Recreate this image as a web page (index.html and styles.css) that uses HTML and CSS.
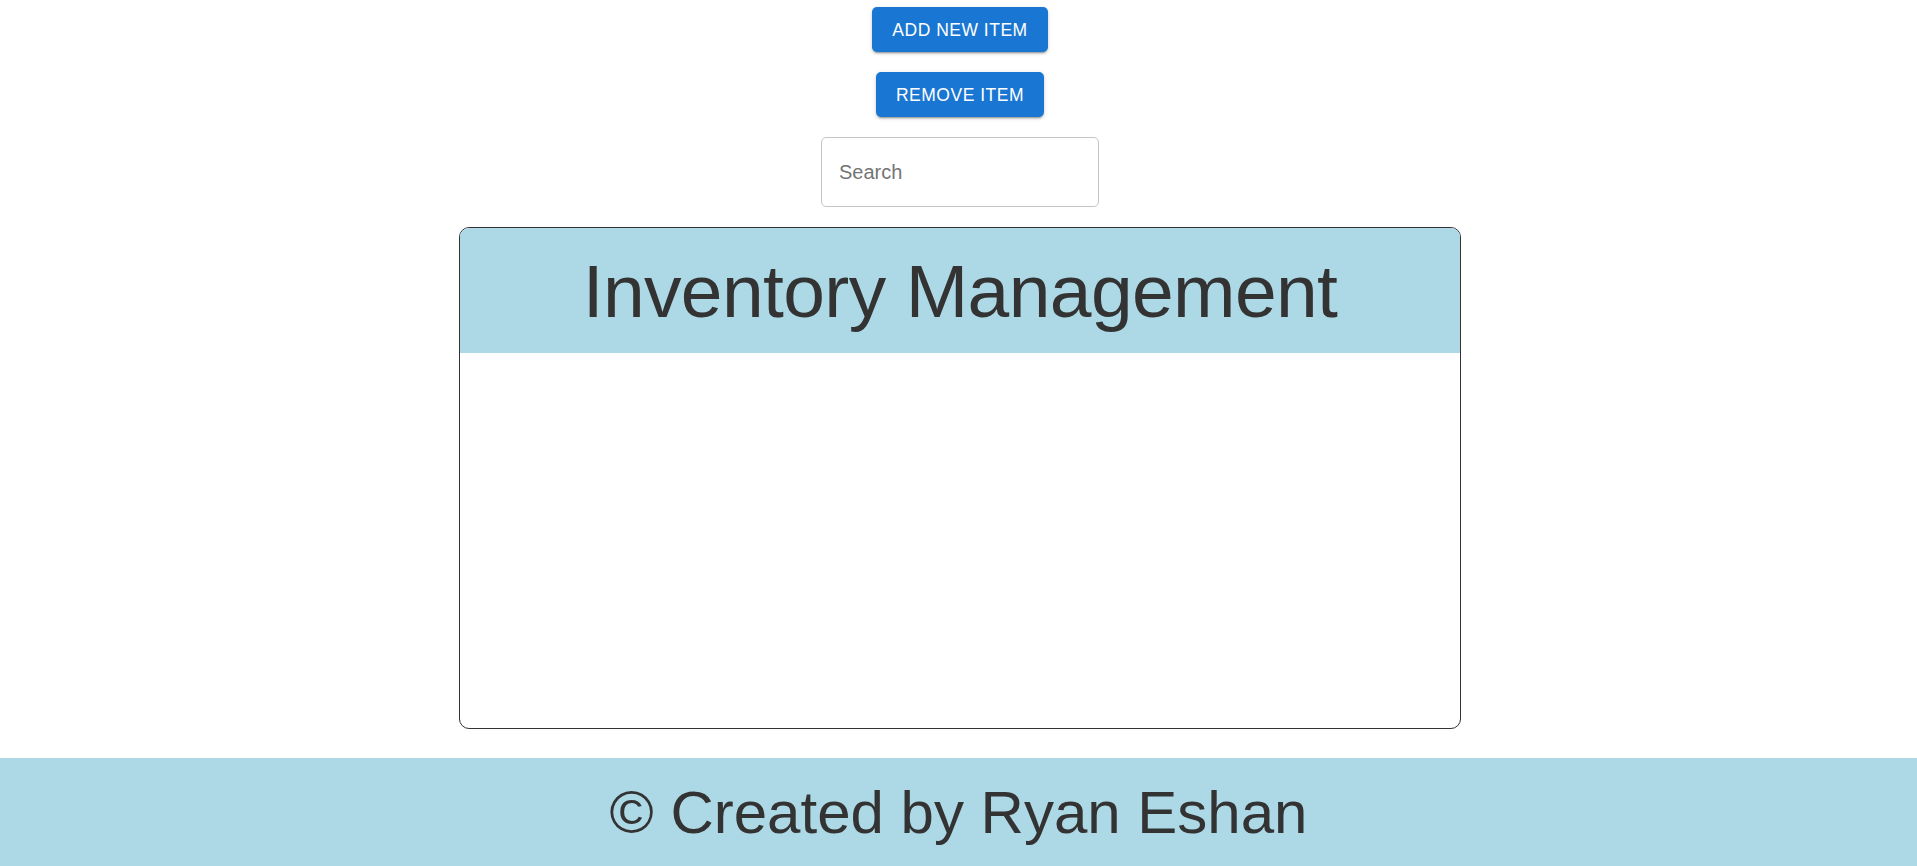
FILE: index.html
```html
<!DOCTYPE html>
<html lang="en">
<head>
<meta charset="utf-8">
<title>Inventory Management</title>
<link rel="stylesheet" href="styles.css">
</head>
<body>
<main class="page">
  <button class="btn" type="button">Add New Item</button>
  <button class="btn" type="button">Remove Item</button>
  <div class="search">
    <input class="search-input" type="text" placeholder="Search">
  </div>
  <section class="inventory">
    <header class="inventory-head">
      <h2 class="inventory-title">Inventory Management</h2>
    </header>
    <div class="inventory-body"></div>
  </section>
</main>
<footer class="footer">
  <h3 class="footer-text">© Created by Ryan Eshan</h3>
</footer>
</body>
</html>
```

FILE: styles.css
```css
html, body {
  margin: 0;
  padding: 0;
  height: 100%;
  overflow: hidden;
  background: #ffffff;
  font-family: "Liberation Sans", Arial, sans-serif;
}

.page {
  display: flex;
  flex-direction: column;
  align-items: center;
  gap: 20px;
  padding: 7px 0 0 3px;
}

.btn {
  font-family: "Liberation Sans", Arial, sans-serif;
  font-size: 17.5px;
  line-height: 30px;
  letter-spacing: 0.5px;
  text-transform: uppercase;
  color: #ffffff;
  background: #1976d2;
  border: 0;
  border-radius: 5px;
  padding: 7.5px 20px;
  box-shadow: 0 3px 1px -2px rgba(0,0,0,0.2), 0 2px 2px 0 rgba(0,0,0,0.14), 0 1px 5px 0 rgba(0,0,0,0.12);
  cursor: pointer;
}

.search {
  width: 278px;
  height: 70px;
  box-sizing: border-box;
  border: 1px solid #c4c4c4;
  border-radius: 5px;
  display: flex;
  align-items: center;
}

.search-input {
  border: 0;
  outline: none;
  background: transparent;
  width: 100%;
  padding: 0 17px;
  font-family: "Liberation Sans", Arial, sans-serif;
  font-size: 20px;
  color: #333;
}

.search-input::placeholder {
  color: #757575;
  opacity: 1;
}

.inventory {
  width: 1000px;
  height: 500px;
  border: 1px solid #333333;
  border-radius: 10px;
  overflow: hidden;
}

.inventory-head {
  height: 125px;
  background: #add8e6;
  display: flex;
  align-items: center;
  justify-content: center;
}

.inventory-title {
  margin: 0;
  font-weight: 400;
  font-size: 75px;
  line-height: 90px;
  letter-spacing: -0.625px;
  color: #333333;
}

.footer {
  margin-top: 29px;
  background: #add8e6;
  height: 110px;
  padding-top: 20px;
  box-sizing: border-box;
  text-align: center;
}

.footer-text {
  margin: 0;
  font-weight: 400;
  font-size: 60px;
  line-height: 70px;
  color: #333333;
}
```
